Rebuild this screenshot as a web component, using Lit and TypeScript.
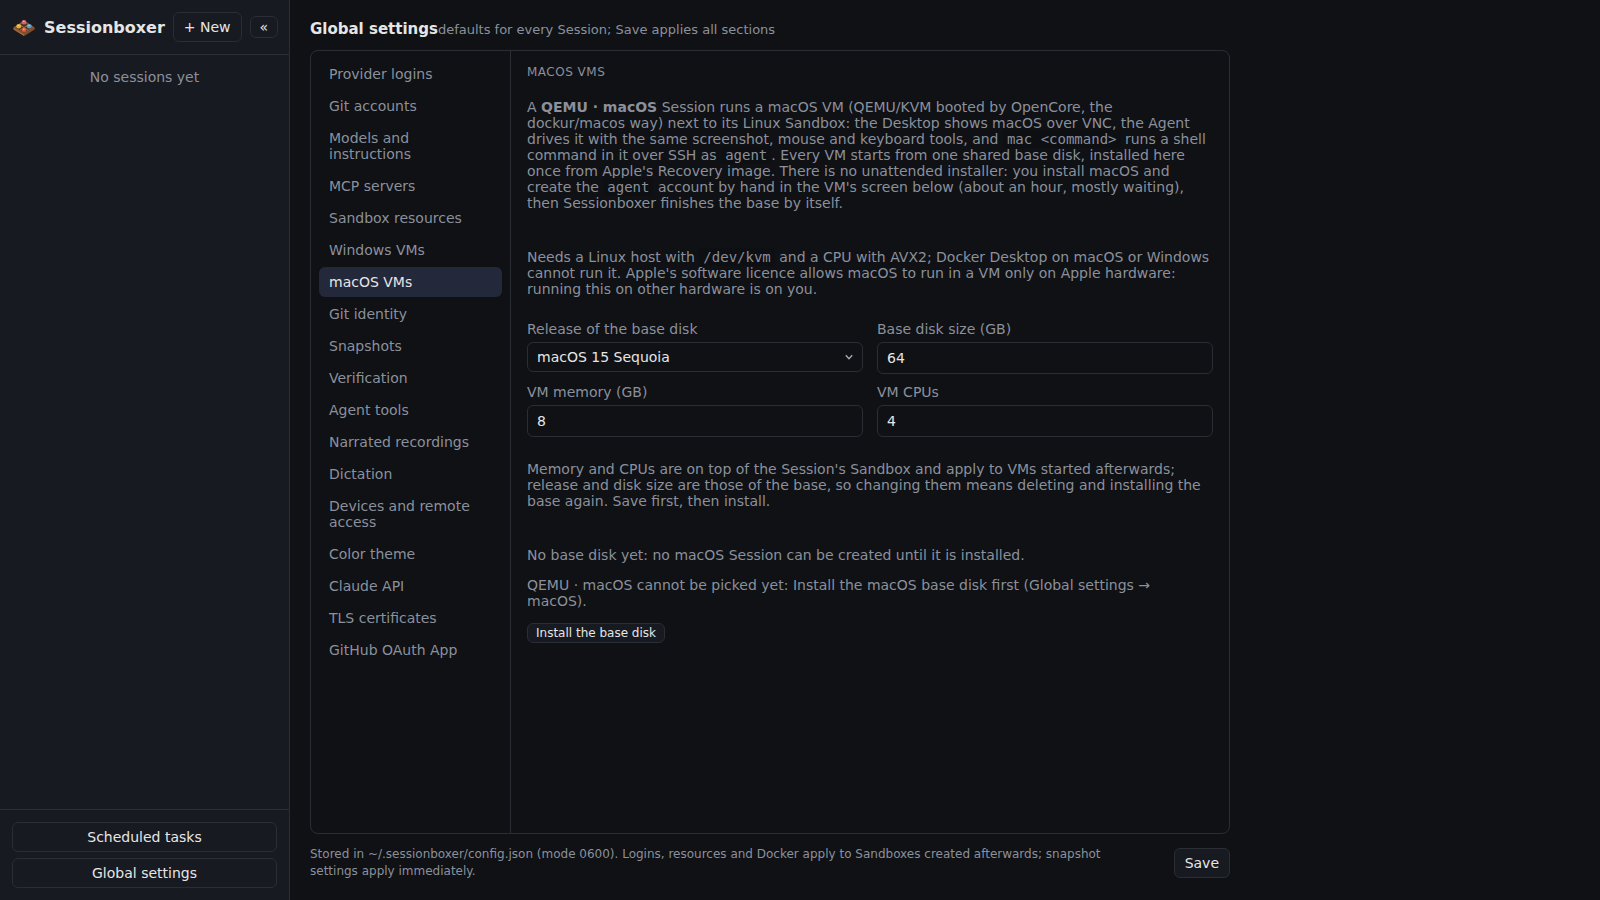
import { LitElement, html, css } from "lit";
import { customElement, property, state } from "lit/decorators.js";

const SECTIONS = [
  "Provider logins",
  "Git accounts",
  "Models and instructions",
  "MCP servers",
  "Sandbox resources",
  "Windows VMs",
  "macOS VMs",
  "Git identity",
  "Snapshots",
  "Verification",
  "Agent tools",
  "Narrated recordings",
  "Dictation",
  "Devices and remote access",
  "Color theme",
  "Claude API",
  "TLS certificates",
  "GitHub OAuth App",
];

const controls = css`
  * {
    box-sizing: border-box;
  }
  button,
  input,
  select {
    font: inherit;
    color: var(--text);
    border: 1px solid var(--border);
    border-radius: 6px;
    margin: 0;
  }
  button {
    background: var(--panel);
    padding: 6px 10px;
    cursor: pointer;
  }
  .small {
    font-size: 12px;
    line-height: 14px;
    padding: 2px 8px;
  }
`;

@customElement("session-sidebar")
export class SessionSidebar extends LitElement {
  static styles = [
    controls,
    css`
      :host {
        display: flex;
        flex-direction: column;
        background: var(--panel);
        border-right: 1px solid var(--border);
      }
      .head {
        display: flex;
        align-items: center;
        gap: 8px;
        padding: 12px;
        border-bottom: 1px solid var(--border);
      }
      .brand {
        display: flex;
        align-items: center;
        gap: 8px;
        flex: 1;
        margin: 0;
        font-size: 16px;
        line-height: 19px;
        font-weight: 700;
      }
      .logo {
        width: 24px;
        height: 24px;
        flex: none;
      }
      .collapse {
        font-size: 14px;
        line-height: 16px;
        padding: 2px 9px;
      }
      .new {
        white-space: nowrap;
      }
      .empty {
        flex: 1;
        margin: 0;
        padding: 14px;
        text-align: center;
        color: var(--muted);
      }
      .foot {
        display: flex;
        flex-direction: column;
        gap: 6px;
        padding: 12px;
        border-top: 1px solid var(--border);
      }
    `,
  ];

  render() {
    return html`
      <header class="head">
        <h1 class="brand">
          <svg class="logo" viewBox="0 0 24 24" aria-hidden="true">
            <path d="M1.500 12.500 12 5.500l10.500 7v2L12 21 1.500 14.500z" fill="#6b3f24" />
            <path d="M1.500 12.500 12 19.200V21L1.500 14.500z" fill="#a3693f" />
            <path d="M12 19.200l10.500-6.700v2L12 21z" fill="#7d4b2b" />
            <path d="M12 5.500l10.500 7L12 19.200 1.500 12.500z" fill="#8a5735" />
            <path d="M12 7l8 5.500-8 5.200-8-5.200z" fill="#50301f" />
            <path d="M8 10l8 5.200M16 10l-8 5.200" stroke="#a87048" stroke-width="1" />
            <ellipse cx="12" cy="7.200" rx="2.500" ry="2.300" fill="#cc6478" />
            <ellipse cx="6.800" cy="11.300" rx="2.500" ry="2.200" fill="#dfb23c" />
            <ellipse cx="17.200" cy="11.300" rx="2.500" ry="2.200" fill="#5d9fc4" />
            <ellipse cx="12" cy="15" rx="2.500" ry="2.100" fill="#d9603f" />
            <path d="M11 6.300h1.500M5.800 10.400h1.500M16.200 10.400h1.500M11 14.200h1.500" stroke="#f2dfc8" stroke-width=".8" />
          </svg>
          Sessionboxer
        </h1>
        <button class="new" type="button">+ New</button>
        <button class="collapse" type="button" aria-label="Collapse sidebar">«</button>
      </header>
      <p class="empty">No sessions yet</p>
      <footer class="foot">
        <button type="button">Scheduled tasks</button>
        <button type="button">Global settings</button>
      </footer>
    `;
  }
}

@customElement("settings-nav")
export class SettingsNav extends LitElement {
  @property() current = "";

  static styles = [
    controls,
    css`
      :host {
        display: block;
        border-right: 1px solid var(--border);
      }
      .list {
        display: flex;
        flex-direction: column;
        gap: 2px;
        padding: 8px;
      }
      .item {
        border: 0;
        padding: 7px 10px;
        background: none;
        text-align: left;
        color: var(--muted);
      }
      .item[aria-current="page"] {
        background: var(--active);
        color: var(--text);
      }
    `,
  ];

  private pick(name: string) {
    this.dispatchEvent(new CustomEvent("pick", { detail: name }));
  }

  render() {
    return html`
      <nav class="list" aria-label="Settings sections">
        ${SECTIONS.map(
          (name) => html`<button
            class="item"
            type="button"
            aria-current=${name === this.current ? "page" : "false"}
            @click=${() => this.pick(name)}
          >${name}</button>`,
        )}
      </nav>
    `;
  }
}

@customElement("macos-section")
export class MacosSection extends LitElement {
  static styles = [
    controls,
    css`
      :host {
        display: block;
        padding: 14px 16px;
        color: var(--muted);
      }
      .title {
        margin: 0 0 20px;
        font-size: 12px;
        line-height: 14px;
        font-weight: 400;
        text-transform: uppercase;
        letter-spacing: 0.5px;
      }
      p {
        margin: 0;
      }
      .note {
        margin-bottom: 38px;
      }
      .lead {
        margin-bottom: 24px;
      }
      code {
        font-family: "DejaVu Sans Mono", monospace;
        font-size: 14px;
        line-height: 1;
        padding: 1px 4px;
        border-radius: 4px;
        background: #0d0f13;
      }
      .fields {
        display: grid;
        grid-template-columns: 1fr 1fr;
        gap: 10px 14px;
        margin-bottom: 24px;
      }
      .field {
        display: flex;
        flex-direction: column;
        gap: 5px;
      }
      .control {
        width: 100%;
        background: var(--bg);
        padding: 7px 9px;
      }
      input.control {
        height: 32px;
        appearance: textfield;
      }
      .pick {
        display: grid;
        align-items: center;
      }
      .pick > * {
        grid-area: 1 / 1;
      }
      select.control {
        height: 30px;
        padding: 0 9px;
        appearance: none;
      }
      .chevron {
        justify-self: end;
        width: 8px;
        height: 8px;
        margin-right: 10px;
        pointer-events: none;
        fill: none;
        stroke: #a9adb5;
        stroke-width: 1.300;
      }
      .status {
        display: flex;
        flex-direction: column;
        align-items: flex-start;
        gap: 14px;
      }
    `,
  ];

  render() {
    return html`
      <h3 class="title">macOS VMs</h3>
      <p class="note">
        A <b>QEMU · macOS</b> Session runs a macOS VM (QEMU/KVM booted by OpenCore, the dockur/macos
        way) next to its Linux Sandbox: the Desktop shows macOS over VNC, the Agent drives it with the
        same screenshot, mouse and keyboard tools, and <code>mac &lt;command&gt;</code> runs a shell
        command in it over SSH as <code>agent</code>. Every VM starts from one shared base disk,
        installed here once from Apple's Recovery image. There is no unattended installer: you install
        macOS and create the <code>agent</code> account by hand in the VM's screen below (about an
        hour, mostly waiting), then Sessionboxer finishes the base by itself.
      </p>
      <p class="lead">
        Needs a Linux host with <code>/dev/kvm</code> and a CPU with AVX2; Docker Desktop on macOS or
        Windows cannot run it. Apple's software licence allows macOS to run in a VM only on Apple
        hardware: running this on other hardware is on you.
      </p>
      <div class="fields">
        <div class="field">
          <label for="release">Release of the base disk</label>
          <div class="pick">
            <select class="control" id="release">
              <option>macOS 15 Sequoia</option>
            </select>
            <svg class="chevron" viewBox="0 0 8 8" aria-hidden="true"><path d="M.800 2.200 4 5.800 7.200 2.200" /></svg>
          </div>
        </div>
        <div class="field">
          <label for="disk">Base disk size (GB)</label>
          <input class="control" id="disk" type="number" value="64" />
        </div>
        <div class="field">
          <label for="memory">VM memory (GB)</label>
          <input class="control" id="memory" type="number" value="8" />
        </div>
        <div class="field">
          <label for="cpus">VM CPUs</label>
          <input class="control" id="cpus" type="number" value="4" />
        </div>
      </div>
      <p class="note">
        Memory and CPUs are on top of the Session's Sandbox and apply to VMs started afterwards;
        release and disk size are those of the base, so changing them means deleting and installing
        the base again. Save first, then install.
      </p>
      <div class="status">
        <p>No base disk yet: no macOS Session can be created until it is installed.</p>
        <p>
          QEMU · macOS cannot be picked yet: Install the macOS base disk first (Global settings →
          macOS).
        </p>
        <button class="small" type="button">Install the base disk</button>
      </div>
    `;
  }
}

@customElement("app-root")
export class AppRoot extends LitElement {
  @state() private section = "macOS VMs";

  static styles = [
    controls,
    css`
      :host {
        --bg: #0f1115;
        --panel: #171a21;
        --border: #2a2d34;
        --text: #e6e6e6;
        --muted: #8b909c;
        --active: #24283b;
        display: grid;
        grid-template-columns: 290px 1fr;
        min-height: 100vh;
        background: var(--bg);
        color: var(--text);
        font: 14px/16px "DejaVu Sans", sans-serif;
      }
      .main {
        display: flex;
        flex-direction: column;
        gap: 12px;
        width: 100%;
        max-width: 960px;
        padding: 20px;
      }
      .head {
        display: flex;
        align-items: baseline;
      }
      .title {
        margin: 0;
        font-size: 15px;
        line-height: 18px;
        font-weight: 700;
      }
      .hint {
        font-size: 13px;
        color: var(--muted);
      }
      .panel {
        flex: 1;
        display: grid;
        grid-template-columns: 200px 1fr;
        border: 1px solid var(--border);
        border-radius: 8px;
      }
      .foot {
        display: flex;
        align-items: center;
        justify-content: space-between;
        gap: 32px;
      }
      .stored {
        margin: 0;
        font-size: 12px;
        line-height: 17px;
        color: var(--muted);
      }
    `,
  ];

  render() {
    return html`
      <session-sidebar></session-sidebar>
      <main class="main">
        <header class="head">
          <h2 class="title">Global settings</h2>
          <span class="hint">defaults for every Session; Save applies all sections</span>
        </header>
        <div class="panel">
          <settings-nav
            .current=${this.section}
            @pick=${(e: CustomEvent<string>) => (this.section = e.detail)}
          ></settings-nav>
          <macos-section></macos-section>
        </div>
        <footer class="foot">
          <p class="stored">
            Stored in ~/.sessionboxer/config.json (mode 0600). Logins, resources and Docker apply to
            Sandboxes created afterwards; snapshot settings apply immediately.
          </p>
          <button type="button">Save</button>
        </footer>
      </main>
    `;
  }
}
